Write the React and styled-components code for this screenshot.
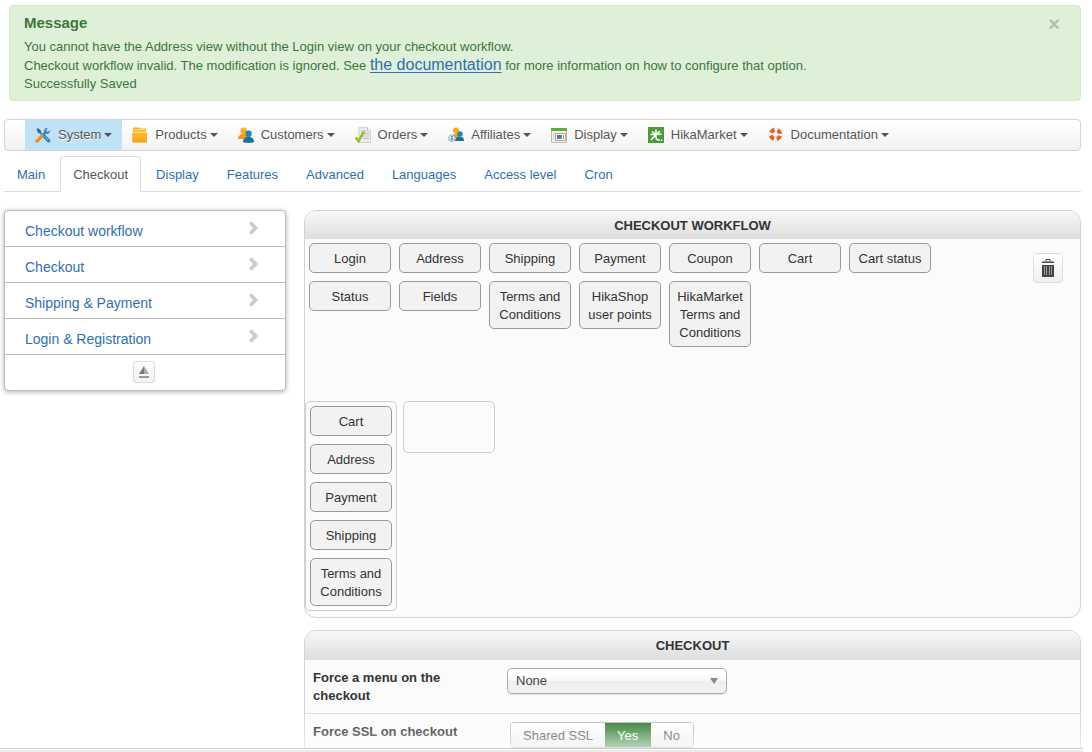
import React, { useState } from "react";
import styled, { createGlobalStyle, css } from "styled-components";

const GlobalStyle = createGlobalStyle`
  *, *::before, *::after { box-sizing: border-box; }
  body {
    margin: 0;
    background: #fff;
    color: #333;
    font-family: "Liberation Sans", Arial, sans-serif;
    font-size: 13px;
    line-height: 18px;
  }
  button, input, select { font: inherit; color: inherit; }
  a { text-decoration: none; }
  ul { margin: 0; padding: 0; list-style: none; }
`;

const Shell = styled.div`
  display: flex;
  flex-direction: column;
  height: 100vh;
`;

const Viewport = styled.div`
  position: relative;
  flex: 1;
  min-height: 0;
  overflow: hidden;
  padding: 5px 11px 0 4px;
`;

const Fade = styled.div`
  position: absolute;
  left: 0;
  right: 0;
  bottom: 0;
  height: 36px;
  pointer-events: none;
  background: linear-gradient(rgba(255, 255, 255, 0), rgba(255, 255, 255, 0.2) 50%, rgba(255, 255, 255, 0.55));
`;

const StatusBar = styled.footer`
  height: 4px;
  margin-right: 9px;
  border-top: 1px solid #ccc;
  background: linear-gradient(#fff 1px, #ebebeb 1px);
`;

const Alert = styled.section`
  display: flex;
  justify-content: space-between;
  align-items: flex-start;
  margin: 0 0 18px 5px;
  min-height: 96px;
  padding: 8px 20px 7px 14px;
  border: 1px solid #d0e9c6;
  border-radius: 4px;
  background: #dff0d8;
  color: #3c763d;
`;

const AlertTitle = styled.h4`
  margin: 0 0 6px;
  font-size: 15px;
  line-height: 18px;
`;

const AlertText = styled.p`
  margin: 0;
`;

const DocLink = styled.a`
  color: #2f6fb0;
  font-size: 16px;
  text-decoration: underline;
  text-underline-offset: 2px;
`;

const CloseButton = styled.button`
  padding: 0;
  border: 0;
  background: none;
  color: #b2c0ad;
  font-size: 20px;
  font-weight: bold;
  line-height: 20px;
  cursor: pointer;
`;

const NavBar = styled.nav`
  display: flex;
  height: 32px;
  margin-bottom: 5px;
  padding-left: 20px;
  border: 1px solid #d4d4d4;
  border-radius: 4px;
  background: linear-gradient(#fff, #f2f2f2);
`;

const NavLink = styled.a`
  display: flex;
  align-items: center;
  padding: 0 10px;
  color: #555;
  text-shadow: 0 1px 0 #fff;
  background: ${(p) => (p.$active ? "#bfe2f5" : "transparent")};
`;

const NavIcon = styled.svg`
  width: 16px;
  height: 16px;
  margin-right: 7px;
  flex: none;
`;

const Caret = styled.span`
  margin-left: 3px;
  border: 4px solid transparent;
  border-top-color: #555;
  border-bottom: 0;
`;

const TabBar = styled.div`
  display: flex;
  gap: 2px;
  margin-bottom: 18px;
  border-bottom: 1px solid #ddd;
`;

const Tab = styled.a`
  margin-bottom: -1px;
  padding: 9px 12px 7px;
  border: 1px solid transparent;
  border-radius: 4px 4px 0 0;
  color: #2f6fb0;
  ${(p) =>
    p.$active &&
    css`
      color: #555;
      background: #fff;
      border-color: #ddd #ddd #fff;
    `}
`;

const Columns = styled.div`
  display: flex;
  align-items: flex-start;
  gap: 18px;
`;

const SideMenu = styled.nav`
  flex: none;
  width: 282px;
  border: 1px solid #bbb;
  border-radius: 4px;
  background: #fff;
  box-shadow: 0 1px 5px rgba(0, 0, 0, 0.3);
`;

const SideLink = styled.a`
  display: flex;
  justify-content: space-between;
  height: 36px;
  padding: 10px 27px 0 20px;
  border-bottom: 1px solid #bbb;
  color: #2f6fb0;
  font-size: 14px;
  line-height: 20px;
`;

const SideFoot = styled.div`
  display: flex;
  justify-content: center;
  padding: 6px 2px 7px 0;
`;

const IconButton = styled.button`
  display: flex;
  align-items: center;
  justify-content: center;
  width: ${(p) => p.$size}px;
  height: ${(p) => p.$size}px;
  padding: 0;
  border: 1px solid #ddd;
  border-radius: 3px;
  background: linear-gradient(#fff, #f0f0f0);
  cursor: pointer;
`;

const Main = styled.main`
  flex: 1;
  min-width: 0;
  display: flex;
  flex-direction: column;
  gap: 12px;
`;

const Panel = styled.section`
  border: 1px solid #d3d3d3;
  border-radius: 12px;
  background: #fbfbfb;
  overflow: hidden;
`;

const PanelTitle = styled.h2`
  margin: 0;
  padding: 6px 5px 4px;
  background: linear-gradient(#f8f8f8, #dedede);
  font-size: 13px;
  line-height: 18px;
  text-align: center;
  text-transform: uppercase;
`;

const Palette = styled.div`
  display: flex;
  justify-content: space-between;
  align-items: flex-start;
  padding: 4px 17px 0 4px;
  min-height: 162px;
`;

const ChipGrid = styled.div`
  display: grid;
  grid-template-columns: repeat(7, 82px);
  align-items: start;
  gap: 8px;
`;

const Chip = styled.button`
  width: 82px;
  padding: 6px 4px 4px;
  border: 1px solid #999;
  border-radius: 5px;
  background: #f2f2f2;
  line-height: 18px;
  cursor: move;
`;

const TrashSlot = styled.div`
  padding-top: 10px;
`;

const Steps = styled.div`
  display: flex;
  align-items: flex-start;
  gap: 6px;
  padding-bottom: 6px;
`;

const Step = styled.div`
  display: flex;
  flex-direction: column;
  gap: 8px;
  width: 92px;
  min-height: 52px;
  padding: 4px;
  border: 1px solid #ccc;
  border-radius: 5px;
`;

const Settings = styled.div`
  border-top: 1px solid #dedede;
`;

const SettingRow = styled.div`
  display: flex;
  align-items: flex-start;
  padding: 8px;
  min-height: 53px;
  border-bottom: 1px solid #ddd;
`;

const SettingLabel = styled.label`
  width: 160px;
  margin-right: 34px;
  padding-top: 1px;
  font-weight: bold;
`;

const SelectBox = styled.div`
  position: relative;
  width: 220px;
`;

const Select = styled.select`
  appearance: none;
  display: block;
  width: 100%;
  height: 26px;
  padding: 0 24px 0 8px;
  border: 1px solid #aaa;
  border-radius: 5px;
  background: linear-gradient(#fff 20%, #f6f6f6 50%, #eee 52%, #f4f4f4 100%);
  color: #444;
  box-shadow: 0 1px 1px rgba(0, 0, 0, 0.1);
`;

const SelectArrow = styled.span`
  position: absolute;
  top: 10px;
  right: 9px;
  border: 4px solid transparent;
  border-top: 6px solid #888;
  border-bottom: 0;
  pointer-events: none;
`;

const Segments = styled.div`
  display: flex;
  margin-left: 3px;
  border: 1px solid #bbb;
  border-radius: 4px;
  overflow: hidden;
`;

const Segment = styled.label`
  position: relative;
  padding: 4px 12px 2px;
  background: ${(p) =>
    p.$on ? "linear-gradient(#2f7a31, #5a9e5c)" : "linear-gradient(#fff, #ececec)"};
  color: ${(p) => (p.$on ? "#fff" : "#555")};

  & + & {
    padding-right: 13px;
  }
`;

const HiddenRadio = styled.input`
  position: absolute;
  inset: 0;
  margin: 0;
  opacity: 0;
`;

const Glyphs = {
  system: (
    <>
      <path d="M3 13.4 10.6 5.2" stroke="#3a86c0" strokeWidth="2.6" strokeLinecap="round" />
      <path d="M14.8 3.2 12.7 5l-1.6-1.4L12.8 1C10.3.4 8.7 2.300 9.200 4.400L11.500 6.800c2.200.5 4-1.300 3.300-3.600z" fill="#3a86c0" />
      <path d="M1.500 2.300 3 1l3.200 3-.3 1.300L8 7.500 6.900 8.600 4.800 6.300 3.600 6.400z" fill="#27688f" />
      <path d="m9 9 4.600 4.700" stroke="#2d83b4" strokeWidth="3.400" strokeLinecap="round" />
      <path d="m1.800 14.200 5.400-5.500" stroke="#f08a24" strokeWidth="3" strokeLinecap="round" />
      <path d="m9.300 9 3.800 4" stroke="#6fb9dd" strokeWidth="1" />
    </>
  ),
  products: (
    <>
      <path d="M1 .5h6l1 1h6V6H1z" fill="#f5a81d" />
      <path d="M2 2.500h11" stroke="#ffe08a" />
      <path d="M1 3.500h13v2H1z" fill="#ffc53a" />
      <path d="M0 5h15v10.500H.5z" fill="#fcb424" />
      <path d="M0 5.500h15" stroke="#ffe07a" />
      <path d="M.4 11h14.400l-.1 4.500H.5z" fill="#f59f10" opacity=".6" />
    </>
  ),
  customers: (
    <>
      <circle cx="5.600" cy="3.700" r="3.200" fill="#f7a823" />
      <path d="M0 12c0-3 2-5 5.600-5S10 9 10 12z" fill="#f39a16" />
      <circle cx="10.600" cy="6.700" r="3.200" fill="#2786ad" />
      <path d="M5 15c0-3.500 2-5 5.500-5S16 11.500 16 15c-2 1.200-9 1.200-11 0z" fill="#1d6f96" />
      <path d="M4 2.600c.6-1 1.800-1.200 2.600-.9" stroke="#ffd98b" fill="none" />
    </>
  ),
  orders: (
    <>
      <path d="M4 .5h8.500L15.500 4v11.500H4z" fill="#e9ebec" stroke="#d0d3d5" />
      <path d="M12.500.5V4h3" fill="#fff" stroke="#c3c7c9" />
      <path d="M6 4h5M6 6.500h8M7 9h7M8 11.500h6" stroke="#b9bdc0" />
      <path d="m.8 10.500 2.700 3.700L9 4.500" fill="none" stroke="#8cc321" strokeWidth="2.400" />
    </>
  ),
  affiliates: (
    <>
      <circle cx="8" cy="3.400" r="3" fill="#f7a823" />
      <path d="M4.500 11c0-3 1-4.500 3.500-4.500S12 8 12 11z" fill="#f39a16" />
      <circle cx="12" cy="7" r="2.800" fill="#2786ad" />
      <path d="M7 14c0-3 2-4.300 5-4.300s4 1.500 4 4.300z" fill="#1d6f96" />
      <circle cx="3.800" cy="11.200" r="3.300" fill="#e4f0f6" stroke="#8fb4c8" />
      <path d="M5 9.800c-1.800-.9-2.700.7-1.200 1.400 1.800.6 1.100 2.300-1.200 1.400" fill="none" stroke="#2b6787" />
    </>
  ),
  display: (
    <>
      <path d="M.5 2h15v13.500H.5z" fill="#eef1f1" stroke="#b6bdc0" />
      <path d="M0 1h16v3H0z" fill="#5fae3c" />
      <path d="M2 5.500h1.500v8H2z" fill="#d9dcde" />
      <path d="M4.500 6.500h10v7h-10z" fill="#fff" stroke="#e88c7c" />
      <path d="M6 8h5v4H6z" fill="#2a7db5" />
      <path d="M12.500 8v4" stroke="#9a9fa2" />
      <path d="M8.500 10H11v2H8.500z" fill="#4cae5b" />
    </>
  ),
  market: (
    <>
      <path d="M0 0h16v16H0z" fill="#4c9a3b" />
      <path
        d="M8 2.500v5M8 7.500 4 4.500M8 7.500l4-3.500M8 7.500H2.500M8 7.500l5.500-.5M8 7.500 3 13M8 7.500c-.5 4 .5 5.500 2.500 5.500H12"
        fill="none"
        stroke="#fff"
        strokeWidth="1.500"
      />
      <path d="M13 12.500h1.500V14H13z" fill="#fff" />
    </>
  ),
  documentation: (
    <>
      <circle cx="7.500" cy="7.500" r="4.700" fill="none" stroke="#dcdcdc" strokeWidth="4.800" />
      <circle cx="7.500" cy="7.500" r="4.700" fill="none" stroke="#f6f6f6" strokeWidth="3.800" />
      <circle
        cx="7.500"
        cy="7.500"
        r="4.700"
        fill="none"
        stroke="#e2602a"
        strokeWidth="4"
        strokeDasharray="4.400 2.983"
        strokeDashoffset="-1.492"
      />
    </>
  ),
};

const NAV = [
  ["System", "system"],
  ["Products", "products"],
  ["Customers", "customers"],
  ["Orders", "orders"],
  ["Affiliates", "affiliates"],
  ["Display", "display"],
  ["HikaMarket", "market"],
  ["Documentation", "documentation"],
];

const TABS = ["Main", "Checkout", "Display", "Features", "Advanced", "Languages", "Access level", "Cron"];
const SECTIONS = ["Checkout workflow", "Checkout", "Shipping & Payment", "Login & Registration"];
const VIEWS = [
  "Login", "Address", "Shipping", "Payment", "Coupon", "Cart", "Cart status",
  "Status", "Fields", "Terms and Conditions", "HikaShop user points", "HikaMarket Terms and Conditions",
];
const STEPS = [["Cart", "Address", "Payment", "Shipping", "Terms and Conditions"], []];
const SSL = ["Shared SSL", "Yes", "No"];

const Chevron = () => (
  <svg width="9" height="14" viewBox="0 0 9 14" aria-hidden="true">
    <path d="m1.300 1.500 5.400 5.500-5.400 5.500" fill="none" stroke="#ccc" strokeWidth="3.600" />
  </svg>
);

const CollapseIcon = () => (
  <svg width="10" height="14" viewBox="0 0 10 14" aria-hidden="true">
    <path d="M5 1v8H0z" fill="#777" />
    <path d="M5 1v8h5z" fill="#aaa" />
    <path d="M0 11h10v2H0z" fill="#999" />
  </svg>
);

const TrashIcon = () => (
  <svg width="12" height="18" viewBox="0 0 12 18" aria-hidden="true">
    <path d="M4 2.500V.5h4v2" fill="none" stroke="#444" />
    <path d="M0 2.500h12V4H0z" fill="#444" />
    <path d="M0 6h12v12H0z" fill="#444" />
    <path d="M2.500 7v9M4.500 7v9M7.500 7v9M9.500 7v9" stroke="#999" />
  </svg>
);

export default function App() {
  const [ssl, setSsl] = useState("Yes");
  return (
    <Shell>
      <GlobalStyle />
      <Viewport>
        <Alert role="status">
          <div>
            <AlertTitle>Message</AlertTitle>
            <AlertText>You cannot have the Address view without the Login view on your checkout workflow.</AlertText>
            <AlertText>
              Checkout workflow invalid. The modification is ignored. See{" "}
              <DocLink href="#documentation">the documentation</DocLink> for more information on how to configure
              that option.
            </AlertText>
            <AlertText>Successfully Saved</AlertText>
          </div>
          <CloseButton type="button" aria-label="Close">×</CloseButton>
        </Alert>

        <NavBar>
          {NAV.map(([name, icon], i) => (
            <NavLink key={name} href={`#${icon}`} $active={i === 0}>
              <NavIcon viewBox="0 0 16 16" fill="none" aria-hidden="true">{Glyphs[icon]}</NavIcon>
              {name}
              <Caret />
            </NavLink>
          ))}
        </NavBar>

        <TabBar>
          {TABS.map((name) => (
            <Tab key={name} href="#tab" $active={name === "Checkout"}>{name}</Tab>
          ))}
        </TabBar>

        <Columns>
          <SideMenu>
            {SECTIONS.map((name) => (
              <SideLink key={name} href="#section">
                {name}
                <Chevron />
              </SideLink>
            ))}
            <SideFoot>
              <IconButton type="button" aria-label="Collapse menu" $size={22}><CollapseIcon /></IconButton>
            </SideFoot>
          </SideMenu>

          <Main>
            <Panel>
              <PanelTitle>Checkout workflow</PanelTitle>
              <Palette>
                <ChipGrid>
                  {VIEWS.map((name) => <Chip key={name} type="button">{name}</Chip>)}
                </ChipGrid>
                <TrashSlot>
                  <IconButton type="button" aria-label="Delete" $size={30}><TrashIcon /></IconButton>
                </TrashSlot>
              </Palette>
              <Steps>
                {STEPS.map((items, i) => (
                  <Step key={i}>
                    {items.map((name) => <Chip key={name} type="button">{name}</Chip>)}
                  </Step>
                ))}
              </Steps>
            </Panel>

            <Panel>
              <PanelTitle>Checkout</PanelTitle>
              <Settings>
                <SettingRow>
                  <SettingLabel htmlFor="force-menu">Force a menu on the checkout</SettingLabel>
                  <SelectBox>
                    <Select id="force-menu" defaultValue="None">
                      <option>None</option>
                    </Select>
                    <SelectArrow />
                  </SelectBox>
                </SettingRow>
                <SettingRow>
                  <SettingLabel as="span" id="ssl-label">Force SSL on checkout</SettingLabel>
                  <Segments role="radiogroup" aria-labelledby="ssl-label">
                    {SSL.map((name) => (
                      <Segment key={name} $on={ssl === name}>
                        <HiddenRadio type="radio" name="ssl" checked={ssl === name} onChange={() => setSsl(name)} />
                        {name}
                      </Segment>
                    ))}
                  </Segments>
                </SettingRow>
              </Settings>
            </Panel>
          </Main>
        </Columns>
        <Fade />
      </Viewport>
      <StatusBar />
    </Shell>
  );
}
